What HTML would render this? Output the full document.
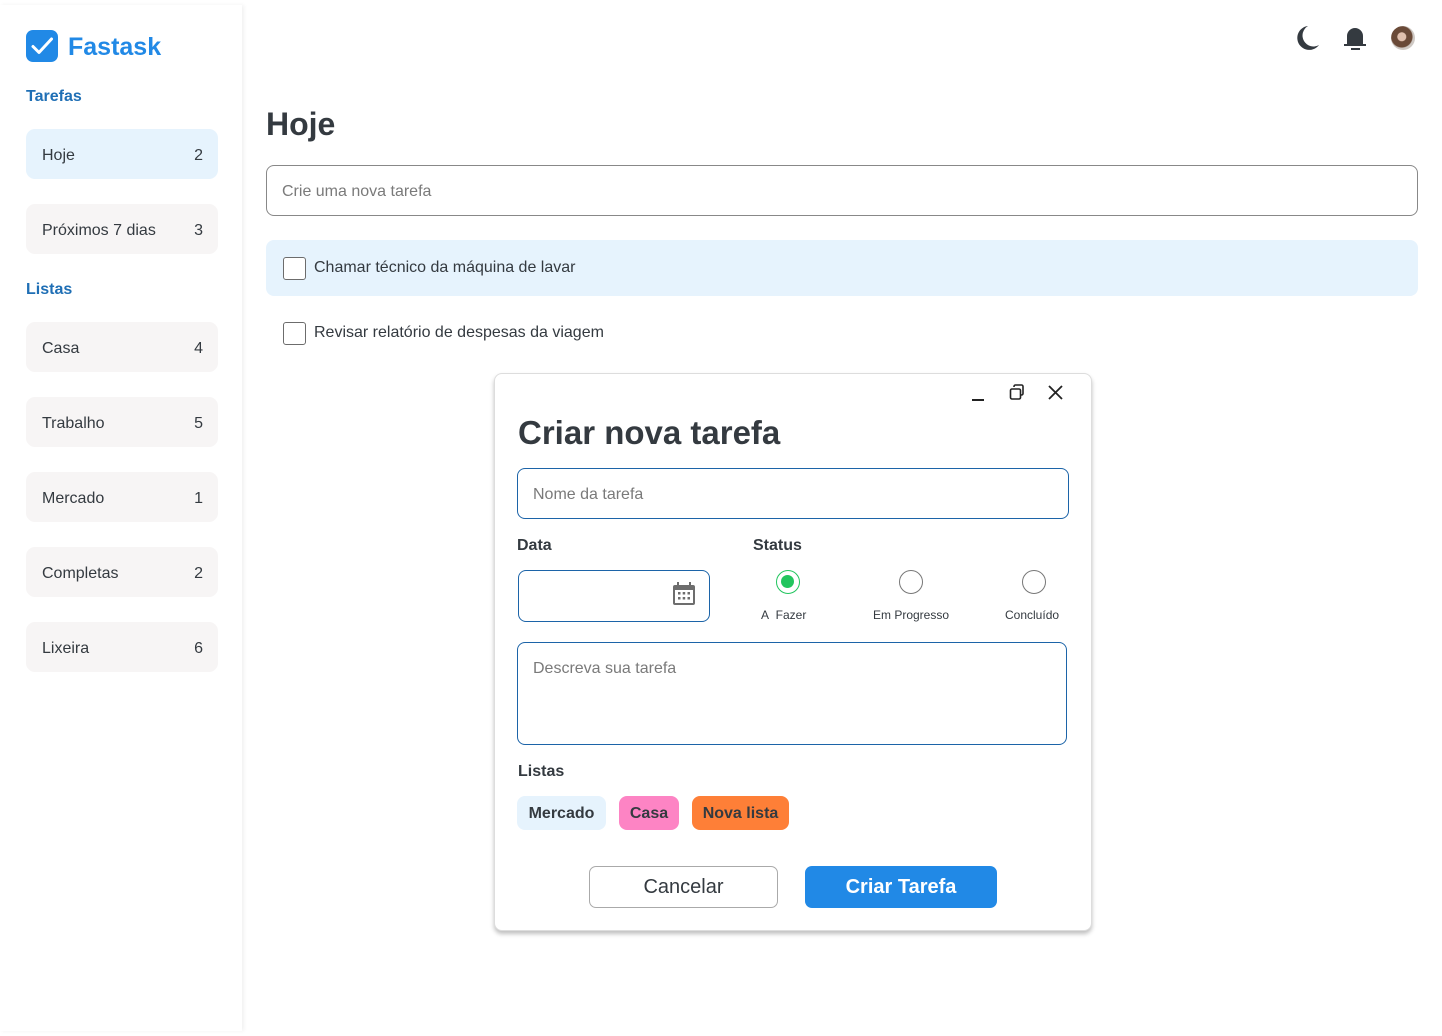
<!DOCTYPE html>
<html><head><meta charset="utf-8"><style>
*{box-sizing:border-box;margin:0;padding:0}
body{width:1442px;height:1036px;background:#fff;font-family:"Liberation Sans",sans-serif;color:#343a40;position:relative;overflow:hidden}
.a{position:absolute}
.side{left:0;top:5px;width:242px;height:1026px;background:#fff;box-shadow:2px 0 4px rgba(0,0,0,.06)}
.item{position:absolute;left:26px;width:192px;height:50px;border-radius:9px;background:#f7f5f5;font-size:16px;display:flex;align-items:center;justify-content:space-between;padding:3px 15px 0 16px;color:#343a40}
.sec{position:absolute;left:26px;font-size:16px;font-weight:bold;color:#1f6fb5}
.cb{position:absolute;width:23px;height:23px;border:1.5px solid #6c6c6c;border-radius:3px;background:#fff}
.inp{position:absolute;border:1px solid #1c64a8;border-radius:8px;background:#fff;font-size:16px;color:#7a7a7a;padding-left:15px}
.radio{position:absolute;width:24px;height:24px;border-radius:50%;border:1.5px solid #777;background:#fff}
.rl{position:absolute;font-size:12px;color:#343a40}
.chip{position:absolute;top:796px;height:34px;border-radius:8px;font-size:16px;font-weight:bold;display:flex;align-items:center;justify-content:center;color:#343a40;padding-top:2px}
</style></head><body>
<div class="a side"></div>
<svg class="a" style="left:26px;top:30px" width="32" height="32" viewBox="0 0 32 32"><rect width="32" height="32" rx="7" fill="#2189e6"/><path d="M7 16.5l6 6L25.5 9" stroke="#fff" stroke-width="3" fill="none" stroke-linecap="round" stroke-linejoin="round"/></svg>
<div class="a" style="left:68px;top:33px;font-size:25px;font-weight:bold;color:#2189e6">Fastask</div>
<div class="sec" style="top:88px">Tarefas</div>
<div class="item" style="top:129px;background:#e6f3fd"><span>Hoje</span><span>2</span></div>
<div class="item" style="top:204px"><span>Próximos 7 dias</span><span>3</span></div>
<div class="sec" style="top:281px">Listas</div>
<div class="item" style="top:322px"><span>Casa</span><span>4</span></div>
<div class="item" style="top:397px"><span>Trabalho</span><span>5</span></div>
<div class="item" style="top:472px"><span>Mercado</span><span>1</span></div>
<div class="item" style="top:547px"><span>Completas</span><span>2</span></div>
<div class="item" style="top:622px"><span>Lixeira</span><span>6</span></div>

<svg class="a" style="left:1294px;top:25px" width="26" height="26" viewBox="0 0 26 26"><path d="M14 1A12 12 0 1 0 25 20 10 10 0 0 1 14 1z" fill="#343a40"/></svg>
<svg class="a" style="left:1342px;top:25px" width="26" height="26" viewBox="0 0 26 26"><path d="M5 19V11a8 8 0 0 1 16 0v8h3v2H2v-2z" fill="#343a40"/><rect x="9" y="23" width="9" height="2" fill="#343a40"/></svg>
<div class="a" style="left:1391px;top:26px;width:24px;height:24px;border-radius:50%;background:radial-gradient(circle at 45% 45%,#e0c0ae 0 22%,#6a4a38 26% 55%,#cfc9c4 60%)"></div>

<div class="a" style="left:266px;top:106px;font-size:32px;font-weight:bold">Hoje</div>
<div class="inp" style="left:266px;top:165px;width:1152px;height:51px;border-color:#888;line-height:51px">Crie uma nova tarefa</div>
<div class="a" style="left:266px;top:240px;width:1152px;height:56px;background:#e6f3fd;border-radius:8px"></div>
<div class="cb" style="left:283px;top:257px"></div>
<div class="a" style="left:314px;top:259px;font-size:16px">Chamar técnico da máquina de lavar</div>
<div class="cb" style="left:283px;top:322px"></div>
<div class="a" style="left:314px;top:324px;font-size:16px">Revisar relatório de despesas da viagem</div>

<div class="a" style="left:494px;top:373px;width:598px;height:558px;background:#fff;border:1px solid #ddd;border-radius:8px;box-shadow:0 3px 4px rgba(0,0,0,.25)"></div>
<div class="a" style="left:972px;top:399px;width:12px;height:2px;background:#222"></div>
<svg class="a" style="left:1009px;top:384px" width="16" height="17" viewBox="0 0 16 17"><rect x="1.5" y="5" width="10" height="10" rx="1.5" fill="none" stroke="#222" stroke-width="1.6"/><path d="M5 3V2.5A1.5 1.5 0 0 1 6.5 1h6A1.5 1.5 0 0 1 14 2.5v7a1.5 1.5 0 0 1-1.5 1.5H12" fill="none" stroke="#222" stroke-width="1.6"/></svg>
<svg class="a" style="left:1048px;top:385px" width="15" height="15" viewBox="0 0 15 15"><path d="M1 1l13 13M14 1L1 14" stroke="#222" stroke-width="1.8"/></svg>
<div class="a" style="left:518px;top:414px;font-size:33px;font-weight:bold">Criar nova tarefa</div>
<div class="inp" style="left:517px;top:468px;width:552px;height:51px;line-height:51px">Nome da tarefa</div>
<div class="a" style="left:517px;top:537px;font-size:16px;font-weight:bold">Data</div>
<div class="a" style="left:753px;top:537px;font-size:16px;font-weight:bold">Status</div>
<div class="inp" style="left:518px;top:570px;width:192px;height:52px"></div>
<svg class="a" style="left:672px;top:582px" width="24" height="24" viewBox="0 0 24 24"><rect x="1" y="3" width="22" height="20" rx="2" fill="#6d6d6d"/><rect x="3" y="8" width="18" height="13" fill="#fff"/><rect x="5" y="0" width="2" height="5" fill="#6d6d6d"/><rect x="17" y="0" width="2" height="5" fill="#6d6d6d"/><g fill="#6d6d6d"><rect x="6" y="10" width="2.5" height="2.5"/><rect x="10.7" y="10" width="2.5" height="2.5"/><rect x="15.5" y="10" width="2.5" height="2.5"/><rect x="6" y="15" width="2.5" height="2.5"/><rect x="10.7" y="15" width="2.5" height="2.5"/><rect x="15.5" y="15" width="2.5" height="2.5"/></g></svg>
<div class="radio" style="left:776px;top:570px;border-color:#22c55e"><div style="position:absolute;left:4px;top:4px;width:13px;height:13px;border-radius:50%;background:#22c55e"></div></div>
<div class="radio" style="left:899px;top:570px"></div>
<div class="radio" style="left:1022px;top:570px"></div>
<div class="rl" style="left:761px;top:608px">A&nbsp; Fazer</div>
<div class="rl" style="left:873px;top:608px">Em Progresso</div>
<div class="rl" style="left:1005px;top:608px">Concluído</div>
<div class="inp" style="left:517px;top:642px;width:550px;height:103px;padding-top:17px">Descreva sua tarefa</div>
<div class="a" style="left:518px;top:763px;font-size:16px;font-weight:bold">Listas</div>
<div class="chip" style="left:517px;width:89px;background:#e6f3fd">Mercado</div>
<div class="chip" style="left:619px;width:60px;background:#fd84c4">Casa</div>
<div class="chip" style="left:692px;width:97px;background:#fe7f37">Nova lista</div>
<div class="a" style="left:589px;top:866px;width:189px;height:42px;border:1px solid #aaa;border-radius:7px;font-size:20px;display:flex;align-items:center;justify-content:center">Cancelar</div>
<div class="a" style="left:805px;top:866px;width:192px;height:42px;background:#2189e6;border-radius:7px;font-size:20px;font-weight:bold;color:#fff;display:flex;align-items:center;justify-content:center">Criar Tarefa</div>
</body></html>
